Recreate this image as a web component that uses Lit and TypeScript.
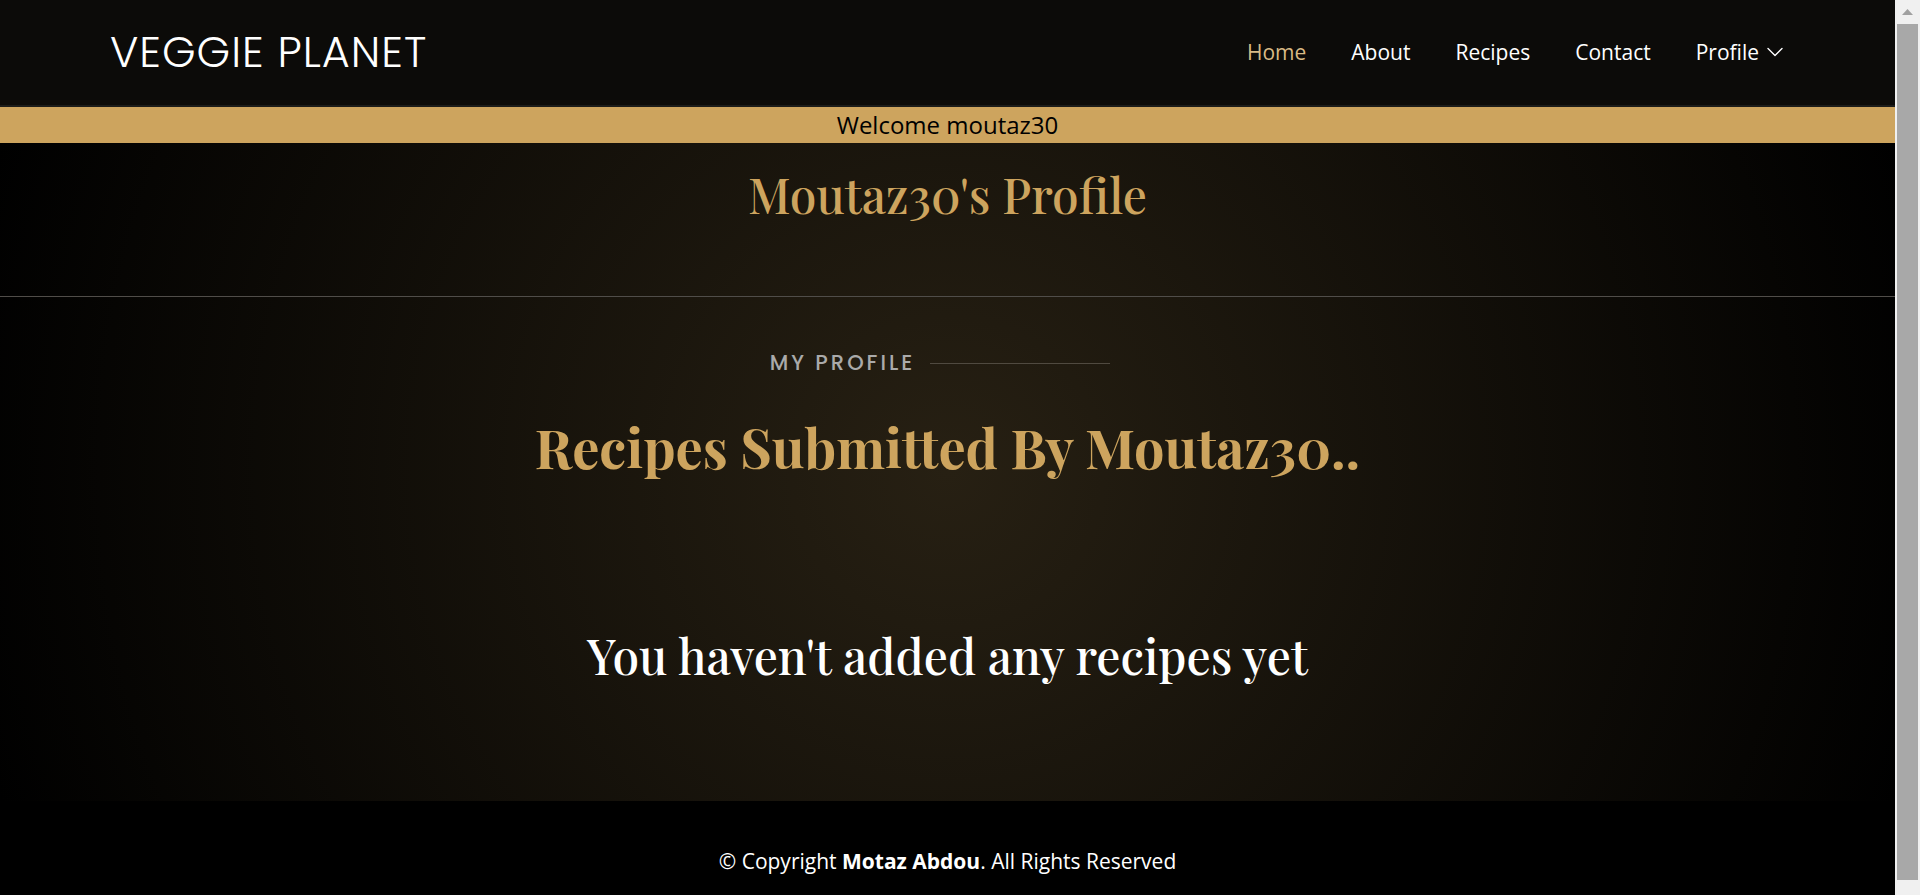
import { LitElement, html, css } from "lit";
import { customElement } from "lit/decorators.js";

@customElement("site-header")
class SiteHeader extends LitElement {
  static styles = css`
    :host { display: block; background: #0c0b09; border-bottom: 2px solid #1c1c1a; }
    .bar {
      display: flex; justify-content: space-between; align-items: center;
      height: 105px; padding: 0 111px 2px 110px; box-sizing: border-box;
    }
    a { text-decoration: none; color: #fff; }
    .logo { font: 300 43px/50px Poppins, Lato, sans-serif; letter-spacing: 1px; white-space: nowrap; }
    .links { display: flex; gap: 45px; margin: 0; padding: 0; list-style: none; font: 400 21px/30px "Open Sans", sans-serif; }
    .active { color: #d9ba85; }
    .menu { display: flex; align-items: center; gap: 7px; }
  `;
  render() {
    return html`
      <div class="bar">
        <a class="logo" href="#">VEGGIE PLANET</a>
        <nav>
          <ul class="links">
            <li><a class="active" href="#">Home</a></li>
            <li><a href="#about">About</a></li>
            <li><a href="#recipes">Recipes</a></li>
            <li><a href="#contact">Contact</a></li>
            <li><a class="menu" href="#profile">Profile
              <svg width="18" height="18" viewBox="0 0 18 18" fill="none" stroke="#fff" stroke-width="1.400" stroke-linecap="round" stroke-linejoin="round" aria-hidden="true"><path d="M2 5.500l7 7 7-7" /></svg></a></li>
          </ul>
        </nav>
      </div>
    `;
  }
}

@customElement("scroll-track")
class ScrollTrack extends LitElement {
  static styles = css`
    :host { display: flex; flex-direction: column; background: #f0f0f0; padding: 0 2px 15px; box-sizing: border-box; }
    .arrow { display: block; height: 24px; }
    .thumb { flex: 1; background: #a8a8a8; }
  `;
  render() {
    return html`
      <svg class="arrow" width="21" viewBox="0 0 21 24" aria-hidden="true"><path d="M5 15h11l-5.500-6z" fill="#a0a0a0" /></svg>
      <div class="thumb"></div>
    `;
  }
}

@customElement("app-root")
class AppRoot extends LitElement {
  static styles = css`
    :host { display: grid; grid-template-columns: minmax(0, 1fr) 25px; min-height: 100vh; background: #000; color: #fff; }
    .page { display: flex; flex-direction: column; }
    .welcome { background: #cda45e; color: #000; text-align: center; font: 400 24px/36px "Open Sans", sans-serif; }
    main {
      flex: 1; display: flex; flex-direction: column; text-align: center;
      background: radial-gradient(circle, #272013, #000);
    }
    h1, h2, h3 { margin: 0; font-family: "Playfair Display", "Liberation Serif", serif; }
    h1 { color: #cda45e; font-size: 48px; line-height: 60px; font-weight: 500; padding: 21px 0 72px; border-bottom: 1px solid #504d49; }
    .kicker {
      display: flex; justify-content: center; align-items: center; gap: 15px; margin: 50px 0 0; padding-right: 15px;
      font: 500 21px/32px Poppins, Lato, sans-serif; letter-spacing: 3px; color: #aaaaaa;
    }
    .kicker::after { content: ""; width: 180px; height: 1px; background: #504a40; }
    h2 { color: #cda45e; font-size: 54px; line-height: 72px; font-weight: 700; margin-top: 32px; }
    h3 { font-size: 48px; line-height: 60px; font-weight: 500; margin-top: 142px; }
    footer { background: #000; text-align: center; font: 400 21px/32px "Open Sans", sans-serif; padding: 44px 0 18px; }
  `;
  render() {
    return html`
      <div class="page">
        <site-header></site-header>
        <div class="welcome">Welcome moutaz30</div>
        <main>
          <h1>Moutaz30's Profile</h1>
          <p class="kicker">MY PROFILE</p>
          <h2>Recipes Submitted By Moutaz30..</h2>
          <h3>You haven't added any recipes yet</h3>
        </main>
        <footer>© Copyright <strong>Motaz Abdou</strong>. All Rights Reserved</footer>
      </div>
      <scroll-track></scroll-track>
    `;
  }
}
